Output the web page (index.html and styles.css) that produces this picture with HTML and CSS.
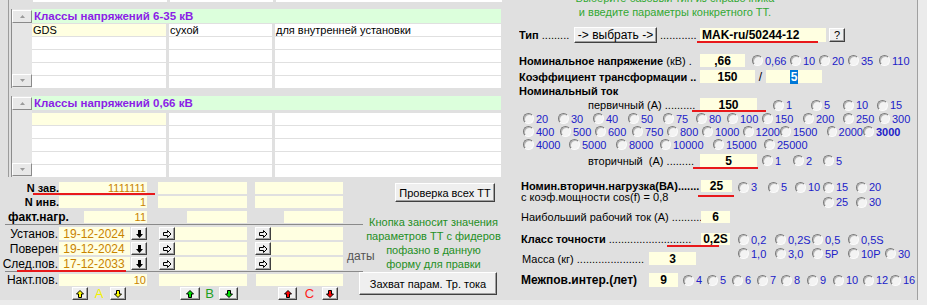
FILE: index.html
```html
<!DOCTYPE html>
<html lang="ru">
<head>
    <meta charset="UTF-8">
    <title>Трансформатор тока</title>
    <link rel="stylesheet" href="styles.css">
</head>
<body>
<div class="screen">

    <!-- left: classes lists + dates form -->
    <div class="left">
        <div class="tables">
            <div class="cells prev">
                <div class="cell"></div><div class="cell"></div><div class="cell"></div>
            </div>

            <div class="section">
                <div class="scroll">
                    <div class="sbtn"><svg width="5" height="3"><path d="M0 3L2.5 0L5 3Z" fill="#9a9a9a"/></svg></div>
                    <div class="track"></div>
                    <div class="sbtn"><svg width="5" height="3"><path d="M0 0L2.5 3L5 0Z" fill="#9a9a9a"/></svg></div>
                </div>
                <div class="list">
                    <div class="list-head">Классы напряжений 6-35 кВ</div>
                    <div class="cells rows">
                        <div class="cell cur">GDS</div><div class="cell">сухой</div><div class="cell">для внутренней установки</div>
                        <div class="cell"></div><div class="cell"></div><div class="cell"></div>
                        <div class="cell"></div><div class="cell"></div><div class="cell"></div>
                        <div class="cell"></div><div class="cell"></div><div class="cell"></div>
                        <div class="cell"></div><div class="cell"></div><div class="cell"></div>
                    </div>
                </div>
            </div>

            <div class="section second">
                <div class="scroll">
                    <div class="sbtn"><svg width="5" height="3"><path d="M0 3L2.5 0L5 3Z" fill="#9a9a9a"/></svg></div>
                    <div class="track"></div>
                    <div class="sbtn"><svg width="5" height="3"><path d="M0 0L2.5 3L5 0Z" fill="#9a9a9a"/></svg></div>
                </div>
                <div class="list">
                    <div class="list-head">Классы напряжений 0,66 кВ</div>
                    <div class="cells rows">
                        <div class="cell cur"></div><div class="cell"></div><div class="cell"></div>
                        <div class="cell"></div><div class="cell"></div><div class="cell"></div>
                        <div class="cell"></div><div class="cell"></div><div class="cell"></div>
                        <div class="cell"></div><div class="cell"></div><div class="cell"></div>
                        <div class="cell"></div><div class="cell"></div><div class="cell"></div>
                    </div>
                </div>
            </div>
        </div>

        <div class="bottom">
            <div class="form">
                <div class="frow first">
                    <span class="lbl b">N зав.</span>
                    <span class="fld w88">1111111</span>
                    <span class="fld w89 ml11"></span>
                    <span class="fld w88 ml8"></span>
                    <i class="mark mark-zav"></i>
                </div>
                <div class="frow gap2">
                    <span class="lbl b">N инв.</span>
                    <span class="fld w88">1</span>
                    <span class="fld w89 ml11"></span>
                    <span class="fld w88 ml8"></span>
                </div>
                <div class="frow gap3">
                    <span class="lbl-load">факт.нагр.</span>
                    <span class="fld w63">11</span>
                    <span class="fld w60 ml40"></span>
                    <span class="fld w59 ml37"></span>
                </div>
                <div class="rule"></div>
                <div class="frow date">
                    <span class="lbl">Установ.</span>
                    <span class="fld dt">19-12-2024</span>
                    <span class="btn sq ml1"><svg width="7" height="8"><path d="M2 0h3v4h2l-3.5 4l-3.5-4h2z" fill="#000"/></svg></span>
                    <span class="btn sq ml12"><svg width="9" height="8"><path d="M0.5 2.5h4v-2l3.5 3.5l-3.5 3.5v-2h-4z" fill="none" stroke="#000"/></svg></span>
                    <span class="fld dt2"></span>
                    <span class="btn sq ml8"><svg width="9" height="8"><path d="M0.5 2.5h4v-2l3.5 3.5l-3.5 3.5v-2h-4z" fill="none" stroke="#000"/></svg></span>
                    <span class="fld dt2"></span>
                </div>
                <div class="frow date">
                    <span class="lbl">Поверен</span>
                    <span class="fld dt">19-12-2024</span>
                    <span class="btn sq ml1"><svg width="7" height="8"><path d="M2 0h3v4h2l-3.5 4l-3.5-4h2z" fill="#000"/></svg></span>
                    <span class="btn sq ml12"><svg width="9" height="8"><path d="M0.5 2.5h4v-2l3.5 3.5l-3.5 3.5v-2h-4z" fill="none" stroke="#000"/></svg></span>
                    <span class="fld dt2"></span>
                    <span class="btn sq ml8"><svg width="9" height="8"><path d="M0.5 2.5h4v-2l3.5 3.5l-3.5 3.5v-2h-4z" fill="none" stroke="#000"/></svg></span>
                    <span class="fld dt2"></span>
                </div>
                <div class="frow date">
                    <span class="lbl">След.пов.</span>
                    <span class="fld dt">17-12-2033</span>
                    <span class="btn sq ml1"><svg width="7" height="8"><path d="M2 0h3v4h2l-3.5 4l-3.5-4h2z" fill="#000"/></svg></span>
                    <span class="btn sq ml12"><svg width="9" height="8"><path d="M0.5 2.5h4v-2l3.5 3.5l-3.5 3.5v-2h-4z" fill="none" stroke="#000"/></svg></span>
                    <span class="fld dt2"></span>
                    <span class="btn sq ml8"><svg width="9" height="8"><path d="M0.5 2.5h4v-2l3.5 3.5l-3.5 3.5v-2h-4z" fill="none" stroke="#000"/></svg></span>
                    <span class="fld dt2"></span>
                    <i class="mark mark-next"></i>
                </div>
                <div class="rule r2"></div>
                <div class="frow gap2">
                    <span class="lbl">Накт.пов.</span>
                    <span class="fld w88">10</span>
                    <span class="fld w88 ml12"></span>
                    <span class="fld w87 ml9"></span>
                </div>
                <div class="phases">
                    <span class="btn ph w16 ml72"><svg width="8" height="8"><path d="M4 0.5L7.5 4H5.5V7.5H2.5V4H0.5Z" fill="#ffff00" stroke="#000"/></svg></span>
                    <span class="ph-letter pa">A</span>
                    <span class="btn ph w16"><svg width="8" height="8"><path d="M4 7.5L7.5 4H5.5V0.5H2.5V4H0.5Z" fill="#ffff00" stroke="#000"/></svg></span>
                    <span class="btn ph w20 ml54"><svg width="8" height="8"><path d="M4 0.5L7.5 4H5.5V7.5H2.5V4H0.5Z" fill="#00e000" stroke="#000"/></svg></span>
                    <span class="ph-letter pb">B</span>
                    <span class="btn ph w19"><svg width="8" height="8"><path d="M4 7.5L7.5 4H5.5V0.5H2.5V4H0.5Z" fill="#00e000" stroke="#000"/></svg></span>
                    <span class="btn ph w19 ml40"><svg width="8" height="8"><path d="M4 0.5L7.5 4H5.5V7.5H2.5V4H0.5Z" fill="#ff0000" stroke="#000"/></svg></span>
                    <span class="ph-letter pc">C</span>
                    <span class="btn ph w16"><svg width="8" height="8"><path d="M4 7.5L7.5 4H5.5V0.5H2.5V4H0.5Z" fill="#ff0000" stroke="#000"/></svg></span>
                </div>
            </div>

            <div class="side">
                <span class="btn btn-check">Проверка всех ТТ</span>
                <div class="note-row">
                    <span class="dates">даты</span>
                    <div class="note">Кнопка заносит значения<br>параметров ТТ с фидеров<br>пофазно в данную<br>форму для правки</div>
                </div>
                <span class="btn btn-grab">Захват парам. Тр. тока</span>
            </div>
        </div>
    </div>

    <!-- right: transformer parameters -->
    <div class="right">
        <div class="hint">Выберите базовый тип из справочника<br>и введите параметры конкретного ТТ.</div>

        <div class="rrow r-type">
            <span class="lead lead-type"><b>Тип</b> .........</span>
            <span class="btn btn-pick">-&gt; выбрать -&gt;</span>
            <span class="lead lead-after">............</span>
            <span class="fld val fld-type">MAK-ru/50244-12</span>
            <span class="btn btn-q">?</span>
            <i class="mark mark-type"></i>
        </div>

        <div class="rrow r-volt">
            <span class="lead"><b>Номинальное напряжение</b> (кВ) .</span>
            <span class="fld val w45">,66</span>
            <div class="opts g-volt">
                <span class="opt"><i class="rb"></i>0,66</span>
                <span class="opt"><i class="rb"></i>10</span>
                <span class="opt"><i class="rb"></i>20</span>
                <span class="opt"><i class="rb"></i>35</span>
                <span class="opt"><i class="rb"></i>110</span>
            </div>
        </div>

        <div class="rrow r-ratio">
            <span class="lead"><b>Коэффициент трансформации ..</b></span>
            <span class="fld val w55">150</span>
            <span class="slash">/</span>
            <span class="fld val w56"><span class="sel">5</span></span>
        </div>

        <div class="rrow r-cur"><b>Номинальный ток</b></div>

        <div class="rrow r-prim">
            <span class="lead sub">первичный (А) ..........</span>
            <span class="fld val w57">150</span>
            <div class="opts g-prim">
                <span class="opt"><i class="rb"></i>1</span>
                <span class="opt"><i class="rb"></i>5</span>
                <span class="opt"><i class="rb"></i>10</span>
                <span class="opt"><i class="rb"></i>15</span>
            </div>
            <i class="mark mark-prim"></i>
        </div>

        <div class="rrow r-list">
            <div class="opts g-a">
                <span class="opt"><i class="rb"></i>20</span>
                <span class="opt"><i class="rb"></i>30</span>
                <span class="opt"><i class="rb"></i>40</span>
                <span class="opt"><i class="rb"></i>50</span>
                <span class="opt"><i class="rb"></i>75</span>
                <span class="opt"><i class="rb"></i>80</span>
                <span class="opt"><i class="rb"></i>100</span>
                <span class="opt"><i class="rb"></i>150</span>
                <span class="opt"><i class="rb"></i>200</span>
                <span class="opt"><i class="rb"></i>250</span>
                <span class="opt"><i class="rb"></i>300</span>
            </div>
        </div>
        <div class="rrow r-list">
            <div class="opts g-b">
                <span class="opt"><i class="rb"></i>400</span>
                <span class="opt"><i class="rb"></i>500</span>
                <span class="opt"><i class="rb"></i>600</span>
                <span class="opt"><i class="rb"></i>750</span>
                <span class="opt"><i class="rb"></i>800</span>
                <span class="opt"><i class="rb"></i>1000</span>
                <span class="opt"><i class="rb"></i>1200</span>
                <span class="opt"><i class="rb"></i>1500</span>
                <span class="opt"><i class="rb"></i>2000</span>
                <span class="opt"><i class="rb"></i><b>3000</b></span>
            </div>
        </div>
        <div class="rrow r-list">
            <div class="opts g-c">
                <span class="opt"><i class="rb"></i>4000</span>
                <span class="opt"><i class="rb"></i>5000</span>
                <span class="opt"><i class="rb"></i>8000</span>
                <span class="opt"><i class="rb"></i>10000</span>
                <span class="opt"><i class="rb"></i>15000</span>
                <span class="opt"><i class="rb"></i>25000</span>
            </div>
        </div>

        <div class="rrow r-sec">
            <span class="lead sub">вторичный &nbsp;(А) .........</span>
            <span class="fld val w57">5</span>
            <div class="opts g-sec">
                <span class="opt"><i class="rb"></i>1</span>
                <span class="opt"><i class="rb"></i>2</span>
                <span class="opt"><i class="rb"></i>5</span>
            </div>
            <i class="mark mark-sec"></i>
        </div>

        <div class="rrow r-load">
            <div class="load-text">
                <b>Номин.вторичн.нагрузка(ВА).......</b><br>
                с коэф.мощности cos(f) = 0,8
            </div>
            <span class="fld val w31">25</span>
            <div class="opts g-load">
                <span class="opt"><i class="rb"></i>3</span>
                <span class="opt"><i class="rb"></i>5</span>
                <span class="opt"><i class="rb"></i>10</span>
                <span class="opt"><i class="rb"></i>15</span>
                <span class="opt"><i class="rb"></i>20</span>
                <span class="opt c4"><i class="rb"></i>25</span>
                <span class="opt c5"><i class="rb"></i>30</span>
            </div>
            <i class="mark mark-load"></i>
        </div>

        <div class="rrow r-max">
            <span class="lead lead-max">Наибольший рабочий ток (А) ..........</span>
            <span class="fld val w29">6</span>
        </div>

        <div class="rrow r-class">
            <div class="class-col">
                <div class="class-line">
                    <span class="lead lead-max"><b>Класс точности</b> ...........................</span>
                    <span class="fld val w29">0,2S</span>
                    <i class="mark mark-class"></i>
                </div>
                <div class="mass-line">
                    <span class="lead lead-mass">Масса (кг) ......................</span>
                    <span class="fld val w47">3</span>
                </div>
            </div>
            <div class="opts g-class">
                <span class="opt"><i class="rb"></i>0,2</span>
                <span class="opt"><i class="rb"></i>0,2S</span>
                <span class="opt"><i class="rb"></i>0,5</span>
                <span class="opt"><i class="rb"></i>0,5S</span>
                <span class="opt c1"><i class="rb"></i>1,0</span>
                <span class="opt"><i class="rb"></i>3,0</span>
                <span class="opt"><i class="rb"></i>5P</span>
                <span class="opt"><i class="rb"></i>10P</span>
                <span class="opt"><i class="rb"></i>30</span>
            </div>
        </div>

        <div class="rrow r-interval">
            <span class="lead lead-mass lead-big">Межпов.интер.(лет)</span>
            <span class="fld val w29 tall">9</span>
            <div class="opts g-int">
                <span class="opt"><i class="rb"></i>4</span>
                <span class="opt"><i class="rb"></i>5</span>
                <span class="opt"><i class="rb"></i>6</span>
                <span class="opt"><i class="rb"></i>7</span>
                <span class="opt"><i class="rb"></i>8</span>
                <span class="opt"><i class="rb"></i>9</span>
                <span class="opt"><i class="rb"></i>10</span>
                <span class="opt"><i class="rb"></i>12</span>
                <span class="opt"><i class="rb"></i>16</span>
            </div>
        </div>
    </div>
</div>
</body>
</html>
```

FILE: styles.css
```css
body {
    margin: 0;
    background-color: #ebebeb;
    font-family: 'Liberation Sans', Arial, sans-serif;
    font-size: 11px;
    color: #000;
    overflow: hidden;
}

.screen {
    display: flex;
    width: 918px;
    height: 300px;
    background-color: #e0e0e0;
    overflow: hidden;
}

b {
    font-weight: bold;
}

/* ---------- shared controls ---------- */

.fld {
    display: flex;
    align-items: center;
    justify-content: flex-end;
    box-sizing: border-box;
    height: 12px;
    padding-right: 1px;
    background-color: #ffffe1;
    color: #c98300;
    white-space: nowrap;
}

.btn {
    display: flex;
    align-items: center;
    justify-content: center;
    box-sizing: border-box;
    background-color: #efefef;
    border: 1px solid;
    border-color: #ffffff #404040 #404040 #ffffff;
    box-shadow: inset -1px -1px #a0a0a0;
    white-space: nowrap;
}

.mark {
    position: absolute;
    height: 2px;
    background-color: #e8191b;
}

.ml1 { margin-left: 1px; }
.ml8 { margin-left: 8px; }
.ml9 { margin-left: 9px; }
.ml11 { margin-left: 11px; }
.ml12 { margin-left: 12px; }
.ml37 { margin-left: 37px; }
.ml40 { margin-left: 40px; }
.ml54 { margin-left: 54px; }
.ml72 { margin-left: 72px; }

/* ---------- left lists ---------- */

.left {
    width: 502px;
    flex-shrink: 0;
}

.tables {
    margin-left: 8px;
    border-left: 1px solid #9c9c9c;
    height: 177px;
}

.cells {
    display: grid;
    grid-template-columns: 134px 103px 226px;
    column-gap: 3px;
    row-gap: 1px;
    margin-left: 24px;
}

.prev .cell {
    height: 2px;
}

.cell {
    background-color: #ffffff;
    line-height: 12px;
    padding-left: 1px;
    white-space: nowrap;
    overflow: hidden;
}

.cell.cur {
    background-color: #ffffe1;
}

.section {
    display: flex;
    margin-top: 7px;
    margin-left: 2px;
    height: 79px;
}

.section.second {
    margin-top: 8px;
    height: 81px;
}

.section .cells {
    margin-left: 0;
}

.scroll {
    display: flex;
    flex-direction: column;
    width: 21px;
    border-left: 1px solid #8c8c8c;
    background-color: #e6e6e6;
    padding: 1px 0 1px 0;
    box-sizing: border-box;
}

.sbtn {
    display: flex;
    align-items: center;
    justify-content: center;
    height: 13px;
    width: 20px;
    box-sizing: border-box;
    background-color: #e8e8e8;
    border: 1px solid;
    border-color: #ffffff #8a8a8a #8a8a8a #ffffff;
}

.track {
    flex: 1;
}

.list {
    width: 469px;
}

.list-head {
    height: 14px;
    line-height: 14px;
    padding-left: 2px;
    background-color: #dcffdc;
    color: #8b1ee6;
    font-size: 11.5px;
    font-weight: bold;
}

.rows {
    grid-auto-rows: 12px;
    margin-top: 1px;
}

.second .rows {
    margin-top: 3px;
}

/* ---------- left form ---------- */

.bottom {
    display: flex;
}

.form {
    width: 343px;
    flex-shrink: 0;
    padding-top: 5px;
}

.frow {
    position: relative;
    display: flex;
    align-items: center;
    height: 12px;
}

.frow.gap2 { margin-top: 2px; }
.frow.gap3 { margin-top: 3px; }

.frow.date {
    height: 13px;
    margin-top: 2px;
}

.frow.date .fld,
.frow.date .btn {
    height: 13px;
}

.lbl {
    width: 59px;
    flex-shrink: 0;
    text-align: right;
    padding-right: 1px;
    box-sizing: border-box;
    font-size: 12px;
    white-space: nowrap;
}

.lbl.b {
    font-size: 11px;
    font-weight: bold;
    padding-right: 0;
}

.lbl-load {
    width: 84px;
    flex-shrink: 0;
    padding-left: 8px;
    box-sizing: border-box;
    font-size: 12px;
    font-weight: bold;
    white-space: nowrap;
}

.w59 { width: 59px; }
.w60 { width: 60px; }
.w63 { width: 63px; }
.w87 { width: 87px; }
.w88 { width: 88px; }
.w89 { width: 89px; }

.fld.dt {
    width: 71px;
    justify-content: center;
    font-size: 12px;
}

.fld.dt2 {
    width: 72px;
}

.btn.sq {
    width: 16px;
}

.rule {
    width: 358px;
    height: 1px;
    margin: 1px 0 0 5px;
    background-color: #8a8a8a;
}

.rule.r2 {
    margin-top: 1px;
}

.mark-zav {
    left: 33px;
    top: 11px;
    width: 122px;
}

.mark-next {
    left: 17px;
    top: 13px;
    width: 109px;
}

.phases {
    display: flex;
    align-items: flex-start;
    height: 14px;
    margin-top: 1px;
}

.btn.ph {
    height: 13px;
}

.w16 { width: 16px; }
.w19 { width: 19px; }
.w20 { width: 20px; }

.ph-letter {
    font-size: 13px;
    text-align: center;
    line-height: 14px;
}

.pa { width: 22px; color: #f2f200; }
.pb { width: 19px; color: #1f9f1f; }
.pc { width: 25px; color: #ff2020; }

/* ---------- left side buttons ---------- */

.side {
    width: 159px;
    padding-top: 6px;
}

.btn-check {
    width: 100px;
    height: 19px;
    margin-left: 52px;
}

.note-row {
    display: flex;
    margin-top: 13px;
}

.dates {
    width: 22px;
    flex-shrink: 0;
    padding: 34px 0 0 4px;
    box-sizing: border-box;
    font-size: 12px;
    line-height: 14px;
    color: #555555;
    white-space: nowrap;
}

.note {
    width: 137px;
    text-align: center;
    line-height: 14px;
    color: #1f8f1f;
    white-space: nowrap;
}

.btn-grab {
    width: 138px;
    height: 23px;
    margin: 1px 0 0 16px;
}

/* ---------- right panel ---------- */

.right {
    width: 415px;
    height: 300px;
    border-right: 1px solid #a0a0a0;
    flex-shrink: 0;
}

.hint {
    width: 346px;
    margin-top: -9px;
    text-align: center;
    line-height: 14px;
    color: #33a833;
}

.rrow {
    position: relative;
    display: flex;
    align-items: center;
    padding-left: 17px;
    white-space: nowrap;
}

.lead {
    width: 181px;
    flex-shrink: 0;
    overflow: hidden;
    white-space: nowrap;
}

.lead.sub {
    padding-left: 69px;
    box-sizing: border-box;
}

.fld.val {
    justify-content: center;
    padding: 0;
    color: #000;
    font-size: 12px;
    font-weight: bold;
}

.r-type {
    height: 16px;
    margin-top: 8px;
}

.lead-type {
    width: 55px;
}

.btn-pick {
    width: 83px;
    height: 16px;
    font-size: 12px;
}

.lead-after {
    width: 43px;
    padding-left: 3px;
    box-sizing: border-box;
}

.fld.fld-type {
    width: 126px;
    height: 14px;
    justify-content: flex-start;
    padding-left: 2px;
}

.btn-q {
    width: 16px;
    height: 14px;
    margin-left: 3px;
}

.mark-type {
    left: 195px;
    top: 14px;
    width: 121px;
}

.r-volt {
    height: 13px;
    margin-top: 11px;
}

.r-volt .fld, .r-ratio .fld {
    height: 13px;
}

.w29 { width: 29px; }
.w31 { width: 31px; }
.w45 { width: 45px; }
.w47 { width: 47px; }
.w55 { width: 55px; }
.w56 { width: 56px; }
.w57 { width: 57px; }

.r-ratio {
    height: 13px;
    margin-top: 3px;
}

.slash {
    width: 11px;
    text-align: center;
    font-size: 12px;
}

.sel {
    background-color: #0078d7;
    color: #ffffff;
    padding: 0 1px;
}

.r-cur {
    height: 13px;
    margin-top: 1px;
}

.r-prim {
    height: 14px;
    margin-top: 1px;
}

.r-prim .fld, .r-sec .fld {
    height: 14px;
}

.mark-prim {
    left: 190px;
    top: 12px;
    width: 74px;
}

.r-list {
    height: 13px;
    padding-left: 21px;
}

.r-sec {
    height: 13px;
    margin-top: 3px;
}

.mark-sec {
    left: 191px;
    top: 13px;
    width: 65px;
}

/* radio groups */

.opts {
    display: grid;
    grid-auto-flow: column;
    align-items: center;
}

.opt {
    display: flex;
    align-items: center;
    gap: 2px;
    color: #2121c8;
    white-space: nowrap;
}

.rb {
    display: block;
    width: 11px;
    height: 11px;
    box-sizing: border-box;
    border-radius: 50%;
    border: 1px solid;
    border-color: #7a7a7a #fbfbfb #fbfbfb #7a7a7a;
    background-color: #f3f3f3;
    box-shadow: inset 1px 1px #b8b8b8;
}

.g-volt { margin-left: 7px; grid-template-columns: 38px 29px 29px 31px auto; }
.g-prim { margin-left: 16px; grid-template-columns: 38px 32px 34px auto; }
.g-a { grid-template-columns: 35px 35px 35px 35px 33px 31px 35px 41px 40px 36px auto; }
.g-b { grid-template-columns: 37px 35px 37px 35px 35px 41px 37px 47px 36px auto; }
.g-c { grid-template-columns: 46px 47px 44px 53px 51px auto; }
.g-sec { margin-left: 5px; grid-template-columns: 31px 30px auto; }
.g-int { margin-left: 5px; grid-template-columns: 24px 25px 25px 24px 26px 26px 30px 27px auto; }

.g-load {
    align-self: flex-start;
    margin-left: 6px;
    grid-auto-flow: row;
    grid-template-columns: 30px 27px 28px 33px auto;
    grid-auto-rows: 14px;
    row-gap: 1px;
}

.g-load .c4 { grid-column: 4; }
.g-load .c5 { grid-column: 5; }

.r-load {
    align-items: flex-start;
    margin-top: 13px;
    padding-left: 19px;
}

.load-text {
    width: 180px;
    flex-shrink: 0;
    padding-top: 1px;
    line-height: 11px;
}

.r-load .fld {
    height: 12px;
}

.mark-load {
    left: 196px;
    top: 15px;
    width: 36px;
}

.r-max {
    height: 12px;
    margin-top: 2px;
    padding-left: 19px;
}

.lead-max {
    width: 180px;
}

.r-class {
    align-items: flex-start;
    margin-top: 10px;
    padding-left: 19px;
}

.class-col {
    width: 217px;
    flex-shrink: 0;
}

.class-line {
    display: flex;
    align-items: center;
    height: 12px;
}

.mark-class {
    left: 165px;
    top: 12px;
    width: 52px;
}

.mass-line {
    display: flex;
    align-items: center;
    height: 13px;
    margin-top: 7px;
}

.mass-line .fld {
    height: 13px;
}

.lead-mass {
    width: 128px;
    padding-left: 1px;
    box-sizing: border-box;
}

.g-class {
    grid-auto-flow: row;
    grid-template-columns: 37px 37px 36px 37px auto;
    grid-auto-rows: 13px;
    row-gap: 1px;
}

.g-class .c1 { grid-column: 1; }

.r-interval {
    height: 14px;
    margin-top: 8px;
    padding-left: 19px;
}

.lead-big {
    padding-left: 0;
    font-size: 12px;
    font-weight: bold;
}

.fld.tall {
    height: 14px;
}
```
